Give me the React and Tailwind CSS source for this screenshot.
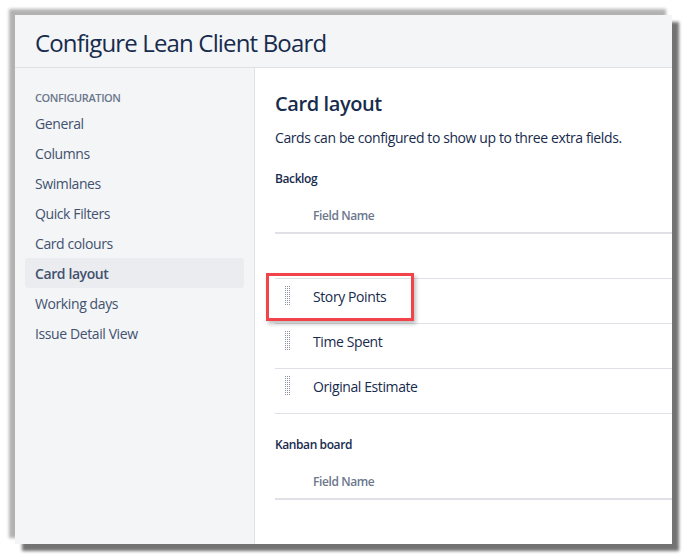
const navItems = [
  'General',
  'Columns',
  'Swimlanes',
  'Quick Filters',
  'Card colours',
  'Card layout',
  'Working days',
  'Issue Detail View',
];

function DragHandle() {
  const dots = [];
  for (let r = 0; r < 10; r++) {
    for (let c = 0; c < 3; c++) {
      dots.push(<rect key={`${r}-${c}`} x={c * 2} y={r * 2} width="1" height="1" fill="#8993a4" />);
    }
  }
  return (
    <svg width="6" height="20" viewBox="0 0 6 20" className="shrink-0">
      {dots}
    </svg>
  );
}

function FieldTable({ title, rows, showEmpty }) {
  return (
    <div>
      <p className="text-[12px] leading-4 font-semibold text-[#172b4d]">{title}</p>
      <div className="mt-[9px] w-[520px]">
        <div className="h-[38px] border-b-2 border-[#dfe1e6] pl-[38px] pt-[12px] text-[12px] leading-4 font-semibold text-[#6b778c]">
          Field Name
        </div>
        {showEmpty && <div className="h-[45px] border-b border-[#dfe1e6]" />}
        {rows.map((row, i) => (
          <div key={row} className="relative flex h-[45px] border-b border-[#dfe1e6]">
            <div className="w-[38px] pl-[10px] pt-[7px]">
              <DragHandle />
            </div>
            <div className="pt-[8px] text-[14px] leading-5 text-[#172b4d]">{row}</div>
            {i === 0 && (
              <div className="absolute left-[-9px] top-[-6px] h-[48px] w-[148px] border-[3px] border-[#f2434b] shadow-[2px_3px_4px_rgba(0,0,0,0.25)]" />
            )}
          </div>
        ))}
      </div>
    </div>
  );
}

export default function App() {
  return (
    <div className="h-[559px] w-[687px] bg-white pl-[15px] pt-[15px] font-['Open_Sans',sans-serif] tracking-[-0.025em]">
      <div className="flex h-[529px] w-[657px] flex-col overflow-hidden bg-white shadow-[-6px_-6px_3px_rgba(0,0,0,0.3),7px_7px_3px_rgba(0,0,0,0.55)]">
        <div className="flex h-[53px] shrink-0 items-center border-b border-[#dfe1e6] bg-[#f4f5f7] pl-[20px] pt-[4px]">
          <h1 className="text-[24px] font-normal leading-7 tracking-[-0.035em] text-[#172b4d]">Configure Lean Client Board</h1>
        </div>
        <div className="flex flex-1 min-h-0">
          <aside className="w-[240px] shrink-0 border-r border-[#dfe1e6] bg-[#f4f5f7] px-[10px] pt-[22px]">
            <p className="px-[10px] text-[11px] font-semibold leading-4 text-[#6b778c]">CONFIGURATION</p>
            <nav className="mt-[2px]">
              {navItems.map((item) => (
                <div
                  key={item}
                  className={`flex h-[30px] items-center rounded-[3px] px-[10px] text-[14px] text-[#42526e] ${
                    item === 'Card layout' ? 'bg-[#ebecf0] font-semibold' : ''
                  }`}
                >
                  {item}
                </div>
              ))}
            </nav>
          </aside>
          <main className="flex-1 overflow-hidden pl-[20px] pt-[24px]">
            <h2 className="text-[20px] font-semibold leading-6 text-[#172b4d]">Card layout</h2>
            <p className="mt-[12px] text-[14px] leading-5 text-[#172b4d]">
              Cards can be configured to show up to three extra fields.
            </p>
            <div className="mt-[23px]">
              <FieldTable title="Backlog" rows={['Story Points', 'Time Spent', 'Original Estimate']} showEmpty />
            </div>
            <div className="mt-[23px]">
              <FieldTable title="Kanban board" rows={[]} />
            </div>
          </main>
        </div>
      </div>
    </div>
  );
}
